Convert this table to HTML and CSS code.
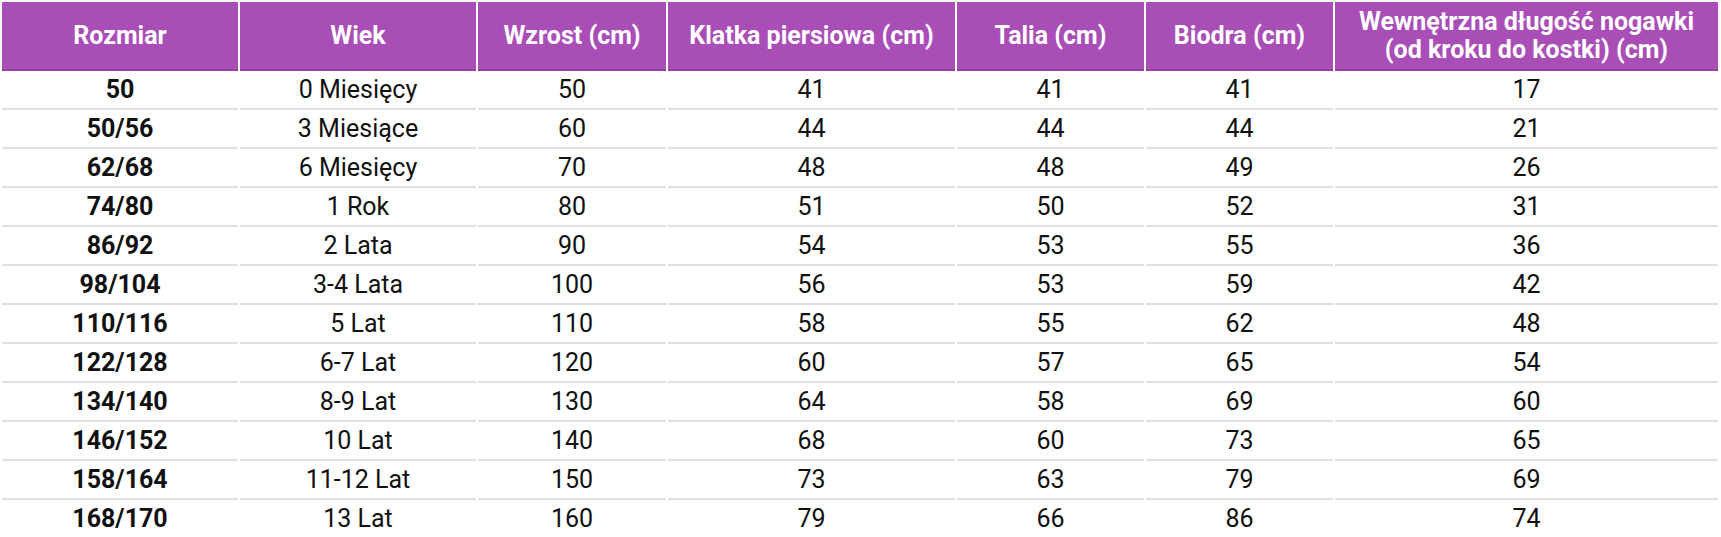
FILE: index.html
```html
<!DOCTYPE html>
<html lang="pl">
<head>
<meta charset="utf-8">
<title>Tabela rozmiarów</title>
<link rel="stylesheet" href="styles.css">
</head>
<body>
<table class="size-table">
  <colgroup>
    <col class="c1"><col class="c2"><col class="c3"><col class="c4"><col class="c5"><col class="c6"><col class="c7">
  </colgroup>
  <thead>
    <tr>
      <th>Rozmiar</th>
      <th>Wiek</th>
      <th>Wzrost (cm)</th>
      <th>Klatka piersiowa (cm)</th>
      <th>Talia (cm)</th>
      <th>Biodra (cm)</th>
      <th>Wewnętrzna długość nogawki<br>(od kroku do kostki) (cm)</th>
    </tr>
  </thead>
  <tbody>
    <tr><td class="size">50</td><td>0 Miesięcy</td><td>50</td><td>41</td><td>41</td><td>41</td><td>17</td></tr>
    <tr><td class="size">50/56</td><td>3 Miesiące</td><td>60</td><td>44</td><td>44</td><td>44</td><td>21</td></tr>
    <tr><td class="size">62/68</td><td>6 Miesięcy</td><td>70</td><td>48</td><td>48</td><td>49</td><td>26</td></tr>
    <tr><td class="size">74/80</td><td>1 Rok</td><td>80</td><td>51</td><td>50</td><td>52</td><td>31</td></tr>
    <tr><td class="size">86/92</td><td>2 Lata</td><td>90</td><td>54</td><td>53</td><td>55</td><td>36</td></tr>
    <tr><td class="size">98/104</td><td>3-4 Lata</td><td>100</td><td>56</td><td>53</td><td>59</td><td>42</td></tr>
    <tr><td class="size">110/116</td><td>5 Lat</td><td>110</td><td>58</td><td>55</td><td>62</td><td>48</td></tr>
    <tr><td class="size">122/128</td><td>6-7 Lat</td><td>120</td><td>60</td><td>57</td><td>65</td><td>54</td></tr>
    <tr><td class="size">134/140</td><td>8-9 Lat</td><td>130</td><td>64</td><td>58</td><td>69</td><td>60</td></tr>
    <tr><td class="size">146/152</td><td>10 Lat</td><td>140</td><td>68</td><td>60</td><td>73</td><td>65</td></tr>
    <tr><td class="size">158/164</td><td>11-12 Lat</td><td>150</td><td>73</td><td>63</td><td>79</td><td>69</td></tr>
    <tr><td class="size">168/170</td><td>13 Lat</td><td>160</td><td>79</td><td>66</td><td>86</td><td>74</td></tr>
  </tbody>
</table>
</body>
</html>
```

FILE: styles.css
```css
html, body {
  margin: 0;
  background: #ffffff;
}

body {
  padding-top: 2px;
  font-family: Roboto, "Liberation Sans", sans-serif;
}

.size-table {
  table-layout: fixed;
  border-collapse: separate;
  border-spacing: 2px 0;
  width: 1720px;
}

.c1 { width: 236px; }
.c2 { width: 236px; }
.c3 { width: 188px; }
.c4 { width: 287px; }
.c5 { width: 187px; }
.c6 { width: 187px; }
.c7 { width: 383px; }

.size-table th {
  background: #aa4eb7;
  color: #ffffff;
  font-weight: 700;
  font-size: 25px;
  line-height: 28px;
  padding: 6px 4px 5px;
  text-align: center;
  vertical-align: middle;
  border-bottom: 2px solid #97409f;
  white-space: nowrap;
}

.size-table td {
  color: #111111;
  font-size: 25px;
  line-height: 37px;
  height: 37px;
  padding: 0;
  text-align: center;
  vertical-align: middle;
  border-bottom: 2px solid #e0e0e0;
  white-space: nowrap;
}

.size-table td.size {
  font-weight: 700;
}
```
